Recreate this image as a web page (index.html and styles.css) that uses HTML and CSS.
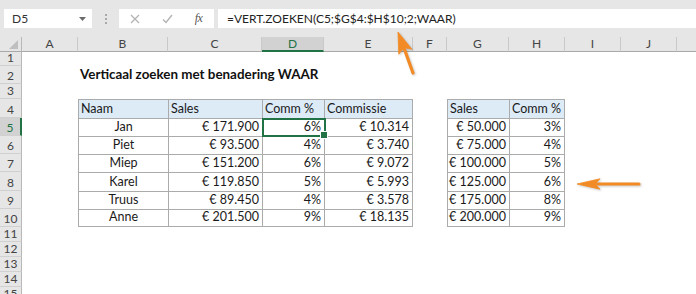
FILE: index.html
```html
<!DOCTYPE html>
<html lang="nl">
<head>
<meta charset="utf-8">
<title>Verticaal zoeken</title>
<link rel="stylesheet" href="styles.css">
</head>
<body>
<div class="app">
  <div class="toolbar">
    <div class="namebox"><span>D5</span><svg class="caret" width="7" height="4" viewBox="0 0 7 4"><path d="M0 0h7L3.5 4z" fill="#6b6b6b"/></svg></div>
    <div class="grip"><i></i><i></i><i></i></div>
    <div class="fnbtns">
      <span class="fb"><svg width="10" height="10" viewBox="0 0 10 10"><path d="M1 1L9 9M9 1L1 9" stroke="#b3b3b3" stroke-width="1.3" fill="none"/></svg></span>
      <span class="fb"><svg width="11" height="10" viewBox="0 0 11 10"><path d="M1 5.5L4 8.5L10 1" stroke="#b3b3b3" stroke-width="1.4" fill="none"/></svg></span>
      <span class="fb fx">fx</span>
    </div>
    <div class="formula">=VERT.ZOEKEN(C5;$G$4:$H$10;2;WAAR)</div>
  </div>

  <div class="sheet">
    <div class="corner"><svg width="9" height="9" viewBox="0 0 9 9"><path d="M9 0V9H0z" fill="#bfbfbf"/></svg></div>
    <div class="ch">A</div><div class="ch">B</div><div class="ch">C</div><div class="ch sel">D</div><div class="ch">E</div><div class="ch">F</div><div class="ch">G</div><div class="ch">H</div><div class="ch">I</div><div class="ch">J</div><div class="ch last"></div>

    <div class="rh">1</div><div></div><div></div><div></div><div></div><div></div><div></div><div></div><div></div><div></div><div></div><div></div>

    <div class="rh">2</div><div></div><div class="title">Verticaal zoeken met benadering WAAR</div><div></div><div></div><div></div><div></div><div></div><div></div><div></div><div></div><div></div>

    <div class="rh">3</div><div></div><div></div><div></div><div></div><div></div><div></div><div></div><div></div><div></div><div></div><div></div>

    <div class="rh">4</div><div></div>
    <div class="c h top">Naam</div><div class="c h top">Sales</div><div class="c h top">Comm %</div><div class="c h top re">Commissie</div>
    <div></div>
    <div class="c h top">Sales</div><div class="c h top re">Comm %</div>
    <div></div><div></div><div></div>

    <div class="rh sel">5</div><div></div>
    <div class="c n">Jan</div><div class="c v">€ 171.900</div><div class="c v active">6%</div><div class="c v re">€ 10.314</div>
    <div></div>
    <div class="c v">€ 50.000</div><div class="c v re">3%</div>
    <div></div><div></div><div></div>

    <div class="rh">6</div><div></div>
    <div class="c n">Piet</div><div class="c v">€ 93.500</div><div class="c v">4%</div><div class="c v re">€ 3.740</div>
    <div></div>
    <div class="c v">€ 75.000</div><div class="c v re">4%</div>
    <div></div><div></div><div></div>

    <div class="rh">7</div><div></div>
    <div class="c n">Miep</div><div class="c v">€ 151.200</div><div class="c v">6%</div><div class="c v re">€ 9.072</div>
    <div></div>
    <div class="c v">€ 100.000</div><div class="c v re">5%</div>
    <div></div><div></div><div></div>

    <div class="rh">8</div><div></div>
    <div class="c n">Karel</div><div class="c v">€ 119.850</div><div class="c v">5%</div><div class="c v re">€ 5.993</div>
    <div></div>
    <div class="c v">€ 125.000</div><div class="c v re">6%</div>
    <div></div><div></div><div></div>

    <div class="rh">9</div><div></div>
    <div class="c n">Truus</div><div class="c v">€ 89.450</div><div class="c v">4%</div><div class="c v re">€ 3.578</div>
    <div></div>
    <div class="c v">€ 175.000</div><div class="c v re">8%</div>
    <div></div><div></div><div></div>

    <div class="rh">10</div><div></div>
    <div class="c n be">Anne</div><div class="c v be">€ 201.500</div><div class="c v be">9%</div><div class="c v re be">€ 18.135</div>
    <div></div>
    <div class="c v be">€ 200.000</div><div class="c v re be">9%</div>
    <div></div><div></div><div></div>

    <div class="rh">11</div><div></div><div></div><div></div><div></div><div></div><div></div><div></div><div></div><div></div><div></div><div></div>
    <div class="rh">12</div><div></div><div></div><div></div><div></div><div></div><div></div><div></div><div></div><div></div><div></div><div></div>
    <div class="rh">13</div><div></div><div></div><div></div><div></div><div></div><div></div><div></div><div></div><div></div><div></div><div></div>
    <div class="rh">14</div><div></div><div></div><div></div><div></div><div></div><div></div><div></div><div></div><div></div><div></div><div></div>
    <div class="rh">15</div><div></div><div></div><div></div><div></div><div></div><div></div><div></div><div></div><div></div><div></div><div></div>
  </div>

  <svg class="arrows" width="696" height="294" viewBox="0 0 696 294">
    <g fill="#f28b25" stroke="#f28b25">
      <line x1="413" y1="73" x2="404" y2="48" stroke-width="3.2" stroke-linecap="round"/>
      <polygon points="398,32 411.9,49.2 404,47.6 398.8,54.2" stroke-width="0.8" stroke-linejoin="round"/>
      <line x1="639" y1="184" x2="594" y2="184" stroke-width="3.2" stroke-linecap="round"/>
      <polygon points="577,184 600,178.8 595,184 600,189.2" stroke-width="0.8" stroke-linejoin="round"/>
    </g>
  </svg>
</div>
</body>
</html>
```

FILE: styles.css
```css
* { box-sizing: border-box; }
html, body {
  margin: 0;
  padding: 0;
  background: #ffffff;
}
body {
  width: 696px;
  height: 294px;
  overflow: hidden;
  font-family: Lato, "Liberation Sans", sans-serif;
  color: #1a1a1a;
}
.app {
  position: relative;
  width: 696px;
  height: 294px;
  overflow: hidden;
}

/* ---------- formula bar ---------- */
.toolbar {
  height: 37px;
  background: #e6e6e6;
  display: flex;
  align-items: flex-start;
  padding-top: 9px;
}
.namebox {
  margin-left: 4px;
  width: 88px;
  height: 19px;
  background: #ffffff;
  display: flex;
  align-items: center;
  justify-content: space-between;
  padding: 0 6px 0 8px;
  font-size: 12px;
  color: #333;
}
.grip {
  width: 27px;
  height: 19px;
  display: flex;
  flex-direction: column;
  align-items: center;
  justify-content: center;
  gap: 2px;
}
.grip i {
  display: block;
  width: 2px;
  height: 2px;
  background: #a8a8a8;
}
.fnbtns {
  width: 95px;
  height: 19px;
  background: #ffffff;
  display: grid;
  grid-template-columns: 32px 32px 31px;
  align-items: center;
}
.fb {
  display: flex;
  justify-content: center;
  align-items: center;
}
.fx {
  font-family: "Liberation Serif", serif;
  font-style: italic;
  font-size: 12px;
  color: #555;
  letter-spacing: -0.5px;
}
.formula {
  margin-left: 4px;
  flex: 1;
  height: 19px;
  background: #ffffff;
  padding-left: 9px;
  font-size: 12px;
  line-height: 19px;
  color: #222;
  white-space: nowrap;
}

/* ---------- sheet ---------- */
.sheet {
  display: grid;
  grid-template-columns: 22px 56px 90px 94px 62px 89px 34px 62px 56px 56px 56px 19px;
  grid-template-rows: 15px 14px 18px 15px 19px 18px 18px 18px 19px 18px 18px 15px 15px 15px 15px 15px;
  font-size: 12.5px;
}
.sheet > div {
  min-width: 0;
  white-space: nowrap;
}
.corner {
  background: #e6e6e6;
  border-right: 1px solid #b8b8b8;
  border-bottom: 1px solid #a9a9a9;
  display: flex;
  justify-content: flex-end;
  align-items: flex-end;
  padding: 0 3px 2px 0;
}
.ch {
  background: #e6e6e6;
  border-right: 1px solid #c9c9c9;
  border-bottom: 1px solid #a9a9a9;
  font-size: 12px;
  color: #444;
  text-align: center;
  line-height: 14px;
}
.ch.last { border-right: none; }
.ch.sel {
  background: #d2d2d2;
  color: #217346;
  border-bottom: 2px solid #217346;
}
.rh {
  background: #e6e6e6;
  border-right: 1px solid #b8b8b8;
  border-bottom: 1px solid #d0d0d0;
  font-size: 12px;
  color: #444;
  display: flex;
  align-items: flex-end;
  justify-content: center;
  line-height: 14px;
}
.rh.sel {
  background: #d2d2d2;
  color: #217346;
  border-right: 2px solid #217346;
}

.title {
  font-weight: 700;
  font-size: 13.4px;
  padding-left: 2px;
  display: flex;
  align-items: flex-end;
  padding-bottom: 2px;
  line-height: 15px;
  color: #111;
  overflow: visible;
}

.c {
  border-left: 1px solid #ababab;
  border-top: 1px solid #ababab;
  display: flex;
  align-items: flex-end;
  padding: 0 3px 2px 3px;
  line-height: 15px;
  color: #1a1a1a;
}
.c.re { border-right: 1px solid #ababab; }
.c.be { border-bottom: 1px solid #ababab; }
.c.h {
  background: #ddebf7;
  justify-content: flex-start;
  padding-left: 2px;
}
.c.n { justify-content: center; }
.c.v { justify-content: flex-end; }

.active {
  position: relative;
  z-index: 2;
}
.active::after {
  content: "";
  position: absolute;
  left: -1px;
  top: -1px;
  right: -2px;
  bottom: -1px;
  border: 2px solid #217346;
}
.active::before {
  content: "";
  position: absolute;
  right: -4px;
  bottom: -3px;
  width: 6px;
  height: 6px;
  background: #217346;
  border: 1px solid #ffffff;
  z-index: 3;
}

.arrows {
  position: absolute;
  left: 0;
  top: 0;
  pointer-events: none;
  filter: drop-shadow(1px 1px 1px rgba(0, 0, 0, 0.22));
}
```
